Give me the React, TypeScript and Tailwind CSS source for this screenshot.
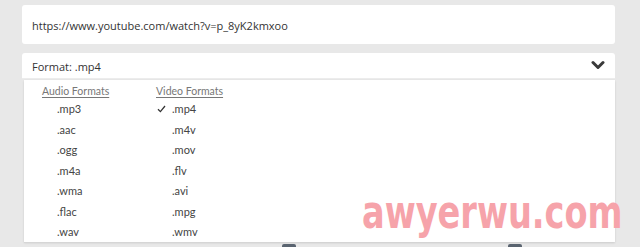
import React from "react";

const audio = [".mp3", ".aac", ".ogg", ".m4a", ".wma", ".flac", ".wav"];
const video = [".mp4", ".m4v", ".mov", ".flv", ".avi", ".mpg", ".wmv"];

export default function App() {
  return (
    <div
      className="relative w-[640px] h-[247px] overflow-hidden bg-[#e8e8e8]"
      style={{ fontFamily: "Lato, 'Open Sans', sans-serif" }}
    >
      <div className="flex flex-col pl-[22px] pr-[25px] pt-[5px]">
        <div className="h-[39px] rounded-[3px] bg-white flex items-center pl-[10px] pt-[4px] text-[11px] text-[#333]" style={{ fontFamily: "'Open Sans', sans-serif" }}>
          https://www.youtube.com/watch?v=p_8yK2kmxoo
        </div>
        <div className="mt-[9px] h-[26px] rounded-t-[3px] bg-white flex items-center justify-between pl-[10px] pr-[10px] text-[11px] text-[#333] border-b border-[#ececec]" style={{ fontFamily: "'Open Sans', sans-serif" }}>
          <span className="pt-[3px]">Format: .mp4</span>
          <svg width="14" height="10" viewBox="0 0 14 10" className="mt-[-2px]">
            <path d="M2 2.5 L7 7.5 L12 2.5" fill="none" stroke="#3a3a3a" strokeWidth="3" strokeLinecap="round" strokeLinejoin="round" />
          </svg>
        </div>
        <div className="ml-[2px] mt-[1px] h-[162px] bg-white shadow-[0_1px_2px_rgba(0,0,0,0.12)] flex pl-[18px] pt-[4px]">
          <div className="w-[114px] flex flex-col">
            <div className="text-[10.5px] text-[#777] underline underline-offset-2 h-[15px] leading-[15px]">Audio Formats</div>
            {audio.map((a) => (
              <div key={a} className="pl-[15px] h-[20.5px] leading-[20.5px] text-[11px] text-[#444]">{a}</div>
            ))}
          </div>
          <div className="flex flex-col">
            <div className="text-[10.5px] text-[#777] underline underline-offset-2 h-[15px] leading-[15px]">Video Formats</div>
            {video.map((v, i) => (
              <div key={v} className="relative pl-[16px] h-[20.5px] leading-[20.5px] text-[11px] text-[#444]">
                {i === 0 && (
                  <svg width="9" height="8" viewBox="0 0 9 8" className="absolute left-[1px] top-[6px]">
                    <path d="M1 4.2 L3.4 6.6 L8 1" fill="none" stroke="#333" strokeWidth="1.3" />
                  </svg>
                )}
                {v}
              </div>
            ))}
          </div>
        </div>
        <div className="ml-[2px] h-[1px] w-[246px] bg-[#d6d6d6]" />
      </div>
      <div className="absolute left-[282px] top-[244px] w-[14px] h-[3px] rounded-t-[2px] bg-[#5a6470]" />
      <div className="absolute left-[508px] top-[244px] w-[14px] h-[3px] rounded-t-[2px] bg-[#5a6470]" />
      <div
        className="absolute left-[362px] top-[189px] text-[46px] leading-[46px] font-bold text-[#f6a3aa] whitespace-nowrap origin-left scale-x-[0.73]"
        style={{ fontFamily: "'DejaVu Sans', sans-serif" }}
      >
        awyerwu.com
      </div>
    </div>
  );
}
